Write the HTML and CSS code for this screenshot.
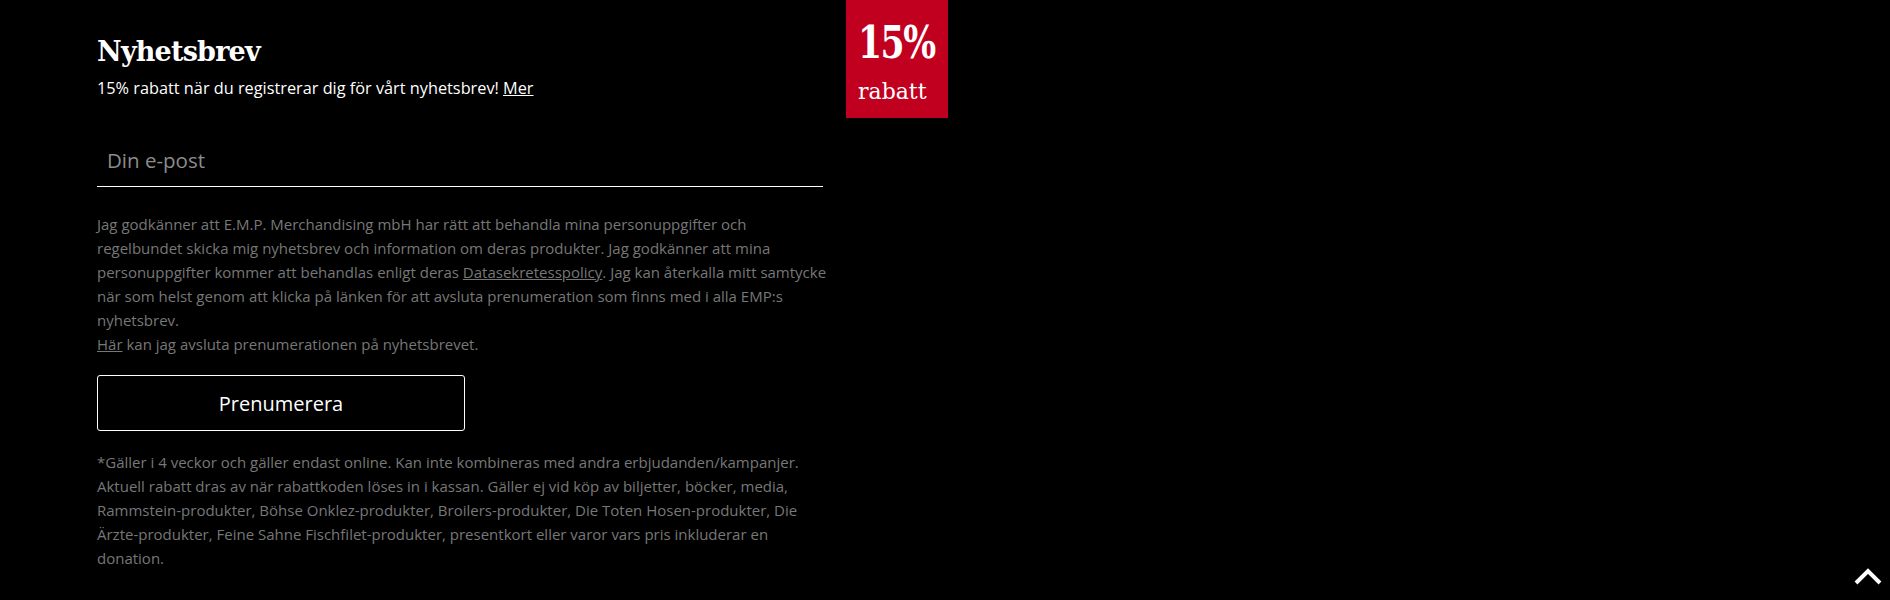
FILE: index.html
```html
<!DOCTYPE html>
<html lang="sv">
<head>
<meta charset="utf-8">
<title>Nyhetsbrev</title>
<link rel="stylesheet" href="styles.css">
</head>
<body>
<div class="page">
  <section class="newsletter">
    <div class="form-col">
      <h2 class="title">Nyhetsbrev</h2>
      <p class="lead">15% rabatt när du registrerar dig för vårt nyhetsbrev! <a href="#" class="lead-link">Mer</a></p>
      <div class="field">
        <input class="email" type="email" placeholder="Din e-post">
      </div>
      <p class="consent">Jag godkänner att E.M.P. Merchandising mbH har rätt att behandla mina personuppgifter och regelbundet skicka mig nyhetsbrev och information om deras produkter. Jag godkänner att mina personuppgifter kommer att behandlas enligt deras <a href="#" class="muted-link">Datasekretesspolicy</a>. Jag kan återkalla mitt samtycke när som helst genom att klicka på länken för att avsluta prenumeration som finns med i alla EMP:s nyhetsbrev.<br><a href="#" class="muted-link">Här</a> kan jag avsluta prenumerationen på nyhetsbrevet.</p>
      <button class="subscribe" type="button">Prenumerera</button>
      <p class="footnote">*Gäller i 4 veckor och gäller endast online. Kan inte kombineras med andra erbjudanden/kampanjer. Aktuell rabatt dras av när rabattkoden löses in i kassan. Gäller ej vid köp av biljetter, böcker, media, Rammstein-produkter, Böhse Onklez-produkter, Broilers-produkter, Die Toten Hosen-produkter, Die Ärzte-produkter, Feine Sahne Fischfilet-produkter, presentkort eller varor vars pris inkluderar en donation.</p>
    </div>
    <div class="badge">
      <span class="badge-num">15%</span>
      <span class="badge-label">rabatt</span>
    </div>
  </section>
  <a href="#" class="to-top" aria-label="Till toppen">
    <svg width="28" height="18" viewBox="0 0 28 18"><path d="M2 16 L14 4 L26 16" fill="none" stroke="#fff" stroke-width="4"/></svg>
  </a>
</div>
</body>
</html>
```
FILE: styles.css
```css
html, body {
  margin: 0;
  padding: 0;
  background: #000;
  height: 100%;
}
.page {
  position: relative;
  min-height: 600px;
  font-family: "Open Sans", "Liberation Sans", sans-serif;
  color: #fff;
}
.newsletter {
  display: flex;
  align-items: flex-start;
  gap: 14px;
  padding-left: 97px;
}
.form-col {
  width: 735px;
  padding-top: 34px;
}
.title {
  margin: 0;
  font-family: "DejaVu Serif", "Liberation Serif", serif;
  font-weight: bold;
  font-size: 27px;
  line-height: 36px;
  letter-spacing: -0.8px;
}
.lead {
  margin: 6px 0 0;
  font-size: 16.3px;
  line-height: 24px;
}
.lead-link {
  color: #fff;
  text-decoration: underline;
}
.field {
  margin-top: 34px;
  width: 726px;
  border-bottom: 1px solid #fff;
}
.email {
  display: block;
  width: 100%;
  box-sizing: border-box;
  background: transparent;
  border: 0;
  outline: none;
  padding: 0 10px;
  height: 52px;
  font-family: "Open Sans", "Liberation Sans", sans-serif;
  font-size: 20.5px;
  color: #fff;
}
.email::placeholder {
  color: #8c8c8c;
}
.consent, .footnote {
  margin: 0;
  font-size: 15px;
  line-height: 24px;
  color: #777;
}
.consent {
  margin-top: 25px;
}
.muted-link {
  color: #777;
  text-decoration: underline;
}
.subscribe {
  display: block;
  margin-top: 19px;
  width: 368px;
  height: 56px;
  background: #000;
  border: 1px solid #fff;
  border-radius: 3px;
  color: #fff;
  font-family: "Open Sans", "Liberation Sans", sans-serif;
  font-size: 20px;
}
.footnote {
  margin-top: 19px;
}
.badge {
  width: 102px;
  height: 118px;
  box-sizing: border-box;
  background: #c1001f;
  padding: 20px 0 0 12px;
  display: flex;
  flex-direction: column;
  font-family: "DejaVu Serif", "Liberation Serif", serif;
}
.badge-num {
  display: block;
  font-weight: bold;
  font-size: 45px;
  line-height: 46px;
  letter-spacing: -2px;
  transform: scaleX(0.77);
  transform-origin: left center;
  white-space: nowrap;
}
.badge-label {
  font-size: 22px;
  line-height: 28px;
  margin-top: 12px;
}
.to-top {
  position: absolute;
  right: 8px;
  bottom: 15px;
  display: block;
  line-height: 0;
}
```
